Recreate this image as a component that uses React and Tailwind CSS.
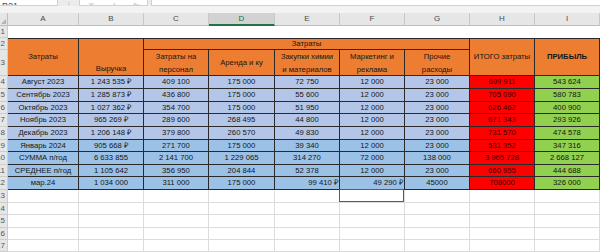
import React from 'react';

const W = ['w-[71px]', 'w-[65px]', 'w-[65px]', 'w-[66px]', 'w-[65px]', 'w-[65px]', 'w-[65px]', 'w-[65px]', 'w-[65px]'];
const LETTERS = ['A', 'B', 'C', 'D', 'E', 'F', 'G', 'H', 'I'];

const data = [
    { n: 4, h: 'h-[13px]', bg: 'bg-[#b4c6e7]', cells: ['Август 2023', '1 243 535 ₽', '409 100', '175 000', '72 750', '12 000', '23 000', '699 911', '543 624'] },
    { n: 5, h: 'h-[13px]', bg: 'bg-[#b4c6e7]', cells: ['Сентябрь 2023', '1 285 873 ₽', '436 800', '175 000', '55 600', '12 000', '23 000', '705 090', '580 783'] },
    { n: 6, h: 'h-[12px]', bg: 'bg-[#b4c6e7]', cells: ['Октябрь 2023', '1 027 362 ₽', '354 700', '175 000', '51 950', '12 000', '23 000', '626 462', '400 900'] },
    { n: 7, h: 'h-[13px]', bg: 'bg-[#b4c6e7]', cells: ['Ноябрь 2023', '965 269 ₽', '289 600', '268 495', '44 800', '12 000', '23 000', '671 343', '293 926'] },
    { n: 8, h: 'h-[13px]', bg: 'bg-[#b4c6e7]', cells: ['Декабрь 2023', '1 206 148 ₽', '379 800', '260 570', '49 830', '12 000', '23 000', '731 570', '474 578'] },
    { n: 9, h: 'h-[12px]', bg: 'bg-[#9bc2e6]', cells: ['Январь 2024', '905 668 ₽', '271 700', '175 000', '39 340', '12 000', '23 000', '531 352', '347 316'] },
    { n: 10, h: 'h-[13px]', bg: 'bg-[#9bc2e6]', cells: ['СУММА п/год', '6 633 855', '2 141 700', '1 229 065', '314 270', '72 000', '138 000', '3 965 728', '2 668 127'] },
    { n: 11, h: 'h-[12px]', bg: 'bg-[#9bc2e6]', cells: ['СРЕДНЕЕ п/год', '1 105 642', '356 950', '204 844', '52 378', '12 000', '23 000', '660 955', '444 688'] },
    { n: 12, h: 'h-[13px]', bg: 'bg-[#9bc2e6]', right: [4, 5], cells: ['мар.24', '1 034 000', '311 000', '175 000', '99 410 ₽', '49 290 ₽', '45000', '708000', '326 000'] },
];

const empty = [
    { n: 13, h: 'h-[13px]' },
    { n: 14, h: 'h-[12px]' },
    { n: 15, h: 'h-[13px]' },
    { n: 16, h: 'h-[12px]' },
    { n: 17, h: 'h-[12px]' },
];

const RowNum = ({ n, h }) => (
    <div className={`${h} w-[8px] shrink-0 overflow-hidden flex items-center justify-end pr-[2px] bg-[#e6e6e6] border-r border-b border-[#cdcdcd] text-[#555] text-[8px]`}>
        <span className="shrink-0">{n}</span>
    </div>
);

const App = () => {
    return (
        <div className="w-[600px] h-[252px] overflow-hidden bg-white text-[7.7px] leading-none text-[#161616]" style={{ fontFamily: '"Liberation Sans", Arial, sans-serif' }}>
            {/* formula bar */}
            <div className="h-[6px] flex bg-[#ececec] overflow-hidden">
                <div className="w-[58px] bg-white border-r border-b border-[#d0d0d0] overflow-hidden flex items-end pl-[2px]">
                    <span className="text-[9px] text-[#444] mb-[-6px]">B21</span>
                </div>
                <div className="w-[21px] flex justify-center items-end text-[#a8a8a8] text-[8px]">
                    <span className="mb-[-3px]">⋮</span>
                </div>
                <div className="w-[69px] bg-white border-b border-x border-[#d0d0d0] flex items-end justify-around text-[#b8b8b8] text-[8px] overflow-hidden">
                    <span className="mb-[-5px]">✕</span>
                    <span className="mb-[-5px]">✓</span>
                    <span className="mb-[-5px] italic">fx</span>
                </div>
                <div className="w-[3px]" />
                <div className="flex-1 bg-white border-b border-l border-[#d0d0d0]" />
            </div>
            <div className="h-[7px] bg-[#f3f3f3]" />

            {/* column letters */}
            <div className="flex h-[13px] bg-[#e6e6e6] text-[#4a4a4a] text-[8px]">
                <div className="w-[8px] shrink-0 border-r border-b border-[#bdbdbd] relative">
                    <div className="absolute right-[1px] bottom-[1px] w-0 h-0 border-l-[5px] border-l-transparent border-b-[5px] border-b-[#b5b5b5]" />
                </div>
                {LETTERS.map((l, i) =>
                    l === 'D' ? (
                        <div key={l} className={`${W[i]} shrink-0 flex items-center justify-center bg-[#d2d2d2] border-r border-[#c8c8c8] border-b-2 border-b-[#217346] text-[#217346]`}>{l}</div>
                    ) : (
                        <div key={l} className={`${W[i]} shrink-0 flex items-center justify-center border-r border-b border-[#c8c8c8] border-b-[#bdbdbd]`}>{l}</div>
                    )
                )}
            </div>

            {/* row 1 */}
            <div className="flex">
                <RowNum n={1} h="h-[12px]" />
                <div className="flex-1 h-[12px] bg-white" />
            </div>

            {/* header rows 2-3 */}
            <div className="flex h-[38px]">
                <div className="w-[8px] shrink-0 flex flex-col">
                    <RowNum n={2} h="h-[12px]" />
                    <RowNum n={3} h="h-[26px]" />
                </div>
                <div className="w-[71px] shrink-0 bg-[#ed7d31] border-t border-r border-b border-[#2a2a2a] flex items-center justify-center">Затраты</div>
                <div className="w-[65px] shrink-0 bg-[#ed7d31] border-t border-r border-b border-[#2a2a2a] flex items-end justify-center pb-[2px]">Выручка</div>
                <div className="w-[326px] shrink-0 flex flex-col">
                    <div className="h-[12px] bg-[#ed7d31] border-t border-r border-b border-[#2a2a2a] flex items-center justify-center">Затраты</div>
                    <div className="h-[26px] flex text-center leading-[13px]">
                        <div className="w-[65px] bg-[#ed7d31] border-r border-b border-[#2a2a2a] flex items-center justify-center">Затраты на<br />персонал</div>
                        <div className="w-[66px] bg-[#ed7d31] border-r border-b border-[#2a2a2a] flex items-center justify-center">Аренда и ку</div>
                        <div className="w-[65px] bg-[#ed7d31] border-r border-b border-[#2a2a2a] flex items-center justify-center">Закупки химии<br />и материалов</div>
                        <div className="w-[65px] bg-[#ed7d31] border-r border-b border-[#2a2a2a] flex items-center justify-center">Маркетинг и<br />реклама</div>
                        <div className="w-[65px] bg-[#ed7d31] border-r border-b border-[#2a2a2a] flex items-center justify-center">Прочие<br />расходы</div>
                    </div>
                </div>
                <div className="w-[65px] shrink-0 bg-[#ed7d31] border-t border-r border-b border-[#2a2a2a] flex items-center justify-center">ИТОГО затраты</div>
                <div className="w-[65px] shrink-0 bg-[#ed7d31] border-t border-r border-b border-[#2a2a2a] flex items-center justify-center font-bold">ПРИБЫЛЬ</div>
            </div>

            {/* data rows */}
            {data.map((row) => (
                <div key={row.n} className="flex">
                    <RowNum n={row.n} h={row.h} />
                    {row.cells.map((c, i) => {
                        const bg = i === 7 ? 'bg-[#ff0000] text-[#3a0000]' : i === 8 ? 'bg-[#92d050]' : row.bg;
                        const align = row.right && row.right.includes(i) ? 'justify-end pr-[1px]' : 'justify-center';
                        return (
                            <div key={i} className={`${W[i]} ${row.h} ${bg} ${align} shrink-0 overflow-hidden whitespace-nowrap flex items-center border-r border-b border-[#2a2a2a]`}>
                                {c}
                            </div>
                        );
                    })}
                </div>
            ))}

            {/* empty rows */}
            {empty.map((row) => (
                <div key={row.n} className="flex">
                    <RowNum n={row.n} h={row.h} />
                    {W.map((w, i) => (
                        <div key={i} className={`${w} ${row.h} shrink-0 bg-white border-r border-b border-[#dcdcdc] relative`}>
                            {row.n === 13 && i === 5 && (
                                <div className="absolute left-[-1px] top-[-1px] right-0 bottom-0 border border-[#5c5c5c]" />
                            )}
                        </div>
                    ))}
                </div>
            ))}
        </div>
    );
};

export default App;
